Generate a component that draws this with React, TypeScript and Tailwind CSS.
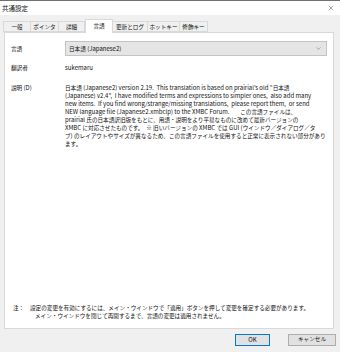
import { ChevronDown, X } from 'lucide-react';

const font = { fontFamily: '"Noto Sans CJK JP", "Noto Sans", sans-serif' };

function T({ text }: { text: string }) {
  const parts = text.split(/([\u3000-\u30ff\u4e00-\u9fff\uff00-\uffef\u203b]+)/);
  return (
    <>
      {parts.map((p, i) =>
        i % 2 === 1 ? (
          <span key={i} className="text-[5.6px]">
            {p}
          </span>
        ) : (
          <span key={i}>{p}</span>
        )
      )}
    </>
  );
}

const tabs = [
  { label: '一般', w: 'w-[28px]' },
  { label: 'ポインタ', w: 'w-[28px]' },
  { label: '詳細', w: 'w-[26px]' },
  { label: '言語', w: 'w-[28px]', active: true },
  { label: '更新とログ', w: 'w-[35px]' },
  { label: 'ホットキー', w: 'w-[32px]' },
  { label: '修飾キー', w: 'w-[28px]' },
];

const description = [
  '日本語 (Japanese2) version 2.19.  This translation is based on prairial\u2019s old \u201C日本語',
  '(Japanese) v2.4\u201D,  I have modified terms and expressions to simpler ones,  also add many',
  'new items.  If you find wrong/strange/missing translations,  please report them,  or send',
  'NEW language file (Japanese2.xmbclp) to the XMBC Forum.        この言語ファイルは、',
  'prairial 氏の日本語訳旧版をもとに、用語・説明をより平易なものに改めて最新バージョンの',
  'XMBC に対応させたものです。  ※ 旧いバージョンの XMBC では GUI (ウインドウ／ダイアログ／タ',
  'ブ) のレイアウトやサイズが異なるため、この言語ファイルを使用すると正常に表示されない部分があり',
  'ます。',
];

export default function App() {
  return (
    <div
      className="flex h-[352px] w-[340px] flex-col overflow-hidden bg-[#f0f0f0] text-[6px] leading-[8px] text-[#111]"
      style={font}
    >
      {/* Title bar */}
      <div className="flex h-[15px] items-center justify-between border-t border-[#707070] bg-white pl-[2px] pr-[5px]">
        <span className="text-[6.5px]">共通設定</span>
        <X size={8} strokeWidth={1.3} className="text-[#333]" />
      </div>

      {/* Tabs */}
      <div className="flex h-[17px] items-end pl-[3px]">
        {tabs.map((t) =>
          t.active ? (
            <div
              key={t.label}
              className={`relative z-10 -mb-px flex h-[14px] ${t.w} items-start justify-center whitespace-nowrap border border-b-0 border-[#d9d9d9] bg-white pt-[2px] text-[5.6px]`}
            >
              {t.label}
            </div>
          ) : (
            <div
              key={t.label}
              className={`flex h-[11px] ${t.w} items-center justify-center whitespace-nowrap border border-l-0 border-[#d9d9d9] bg-[#f0f0f0] text-[5.6px] first:border-l`}
            >
              {t.label}
            </div>
          )
        )}
      </div>

      {/* Panel */}
      <div className="mx-[4px] flex h-[297px] w-[330px] flex-col border border-[#d9d9d9] bg-white px-[6px] pb-[8px] pt-[8px]">
        <div className="flex items-center">
          <span className="w-[54px] shrink-0 text-[5.6px]">言語</span>
          <div className="flex h-[15px] w-[264px] items-center justify-between border border-[#c4c4c4] bg-[#e5e5e5] pl-[3px] pr-[4px]">
            <span>
              <T text="日本語 (Japanese2)" />
            </span>
            <ChevronDown size={7} strokeWidth={1.5} className="text-[#555]" />
          </div>
        </div>

        <div className="mt-[8px] flex items-center">
          <span className="w-[54px] shrink-0 text-[5.6px]">翻訳者</span>
          <span>sukemaru</span>
        </div>

        <div className="mt-[12px] flex">
          <span className="w-[54px] shrink-0">
            <T text="説明 (D)" />
          </span>
          <div className="flex flex-col">
            {description.map((line, i) => (
              <span key={i} className="whitespace-pre">
                <T text={line} />
              </span>
            ))}
          </div>
        </div>

        <div className="mt-auto flex pl-[2px]">
          <span className="w-[17px] shrink-0 text-[5.6px]">注：</span>
          <div className="flex flex-col">
            <span className="whitespace-pre text-[5.6px]">
              設定の変更を有効にするには、メイン・ウインドウで「適用」ボタンを押して変更を確定する必要があります。
            </span>
            <span className="whitespace-pre pl-[5px] text-[5.6px]">
              メイン・ウインドウを閉じて再開するまで、言語の変更は適用されません。
            </span>
          </div>
        </div>
      </div>

      {/* Buttons */}
      <div className="flex justify-end gap-[18px] pr-[4px] pt-[5px]">
        <button
          type="button"
          className="flex h-[12px] w-[35px] items-center justify-center border border-[#0078d7] bg-[#e1e1e1] text-[6px] leading-none"
        >
          OK
        </button>
        <button
          type="button"
          className="flex h-[12px] w-[48px] items-center justify-center border border-[#adadad] bg-[#e1e1e1] text-[5.6px] leading-none"
        >
          キャンセル
        </button>
      </div>
    </div>
  );
}
